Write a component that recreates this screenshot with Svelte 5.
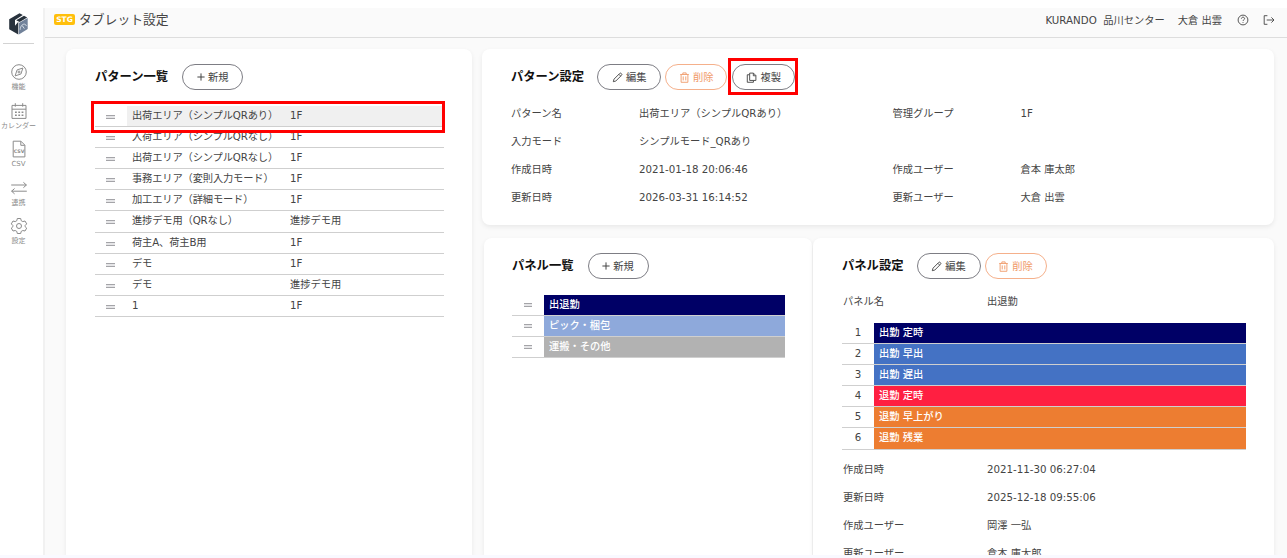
<script>
  const patterns = [
    ['出荷エリア（シンプルQRあり）', '1F'],
    ['入荷エリア（シンプルQRなし）', '1F'],
    ['出荷エリア（シンプルQRなし）', '1F'],
    ['事務エリア（変則入力モード）', '1F'],
    ['加工エリア（詳細モード）', '1F'],
    ['進捗デモ用（QRなし）', '進捗デモ用'],
    ['荷主A、荷主B用', '1F'],
    ['デモ', '1F'],
    ['デモ', '進捗デモ用'],
    ['1', '1F']
  ];
  const details = [
    ['パターン名', '出荷エリア（シンプルQRあり）', '管理グループ', '1F'],
    ['入力モード', 'シンプルモード_QRあり', '', ''],
    ['作成日時', '2021-01-18 20:06:46', '作成ユーザー', '倉本 庫太郎'],
    ['更新日時', '2026-03-31 16:14:52', '更新ユーザー', '大倉 出雲']
  ];
  const panels = [
    ['出退勤', '#000066'],
    ['ピック・梱包', '#8ea9db'],
    ['運搬・その他', '#b2b2b2']
  ];
  const items = [
    ['出勤 定時', '#000066'],
    ['出勤 早出', '#4472c4'],
    ['出勤 遅出', '#4472c4'],
    ['退勤 定時', '#ff1f41'],
    ['退勤 早上がり', '#ed7d31'],
    ['退勤 残業', '#ed7d31']
  ];
  const meta = [
    ['作成日時', '2021-11-30 06:27:04'],
    ['更新日時', '2025-12-18 09:55:06'],
    ['作成ユーザー', '岡澤 一弘'],
    ['更新ユーザー', '倉本 庫太郎']
  ];
  const nav = [
    ['compass', '機能'],
    ['calendar', 'カレンダー'],
    ['csv', 'CSV'],
    ['arrows', '連携'],
    ['gear', '設定']
  ];
</script>

{#snippet plus()}
  <svg class="plus" viewBox="0 0 8 8"><path d="M4 .4v7.2M.4 4h7.2" /></svg>
{/snippet}
{#snippet editBtn()}
  <button class="edit"><svg viewBox="0 0 12 12"><path d="M1.4 10.6 2.2 7.8 8.5 1.5Q9.3.8 10.1 1.6L10.5 2Q11.2 2.8 10.4 3.6L4.2 9.8ZM7.5 2.5 9.5 4.5" /></svg>編集</button>
{/snippet}
{#snippet deleteBtn()}
  <button class="delete"><svg viewBox="0 0 12 12"><path d="M1.3 2.7h9.4M4.2 2.5V1h3.6v1.5M2.3 2.9v8.3h7.4V2.9M4.6 4.8v4.4M7.4 4.8v4.4" /></svg>削除</button>
{/snippet}

<div class="page">
  <nav>
    <svg class="logo" viewBox="0 0 20 22">
      <path fill="#28323d" d="M.2 6.2 10.5.3l3.3 1.8L6 6.9v5.8l3.3-3.9 0 12.7L.2 16.2Z" />
      <path fill="#28323d" d="M7.2 7.2 15 2.8l3.2 1.8L10.7 9Z" />
      <path fill="#71829a" d="m9.9 10.1 8.8-5v11L9.9 21.4Z" />
      <path fill="none" stroke="#d5dde6" d="M11.2 16.7c0-5 4.8-7.5 6.2-3.8M13.2 12.5l2.1 3.1" />
    </svg>
    <hr />
    {#each nav as [icon, label]}
      <div class="nav-item">
        <svg viewBox="0 0 18 18">
          {#if icon === 'compass'}
            <circle cx="9" cy="9" r="7.3" /><path d="m5.1 12.9 2-6 5.8-1.9-2 6Z" /><circle cx="9" cy="9" r="1" />
          {:else if icon === 'calendar'}
            <path d="M2 3.4h14v13H2ZM2 7.2h14M5.3 1.2v3.5M12.7 1.2v3.5" /><path class="dots" d="M5 10.2h8.5M5 13.2h8.5" />
          {:else if icon === 'csv'}
            <path d="M3.2 1.2h7.7l4 4v11.7H3.2ZM10.8 1.3v4h4" />
            <text x="9.1" y="12.8" text-anchor="middle">CSV</text>
          {:else if icon === 'arrows'}
            <path d="M1.2 6h15.2l-3-2.7M16.4 6l-3 2.7M16.8 12.2H1.6l3-2.7M1.6 12.2l3 2.7" />
          {:else}
            <path d="M7.3 1.5h3.4l.5 2.2 1.6.9 2.2-.6 1.7 2.9L15.1 8.5v1.2l1.6 1.4-1.7 2.9-2.2-.5-1.6.9-.5 2.1H7.3l-.5-2.1-1.6-.9-2.2.5-1.7-2.9 1.6-1.4V8.5L1.3 6.9 3 4l2.2.6 1.6-.9Z" /><circle cx="9" cy="9" r="2.5" />
          {/if}
        </svg>
        <span>{label}</span>
      </div>
    {/each}
  </nav>

  <div class="body">
    <header>
      <span class="tag">STG</span>
      <h1>タブレット設定</h1>
      <span class="site">KURANDO&nbsp; 品川センター</span>
      <span class="user">大倉 出雲</span>
      <svg viewBox="0 0 12 12"><circle cx="6" cy="6" r="4.9" /><path d="M4.4 4.7c0-2 3.2-2 3.2 0 0 1-1.6 1.2-1.6 2.3M6 8.1v.8" /></svg>
      <svg class="exit" viewBox="0 0 12 12"><path d="M4.4 1.7H1.2v8.6h3.2M3.7 6h7.2M8.4 3.4 11 6 8.4 8.6" /></svg>
    </header>

    <main>
      <section class="card patterns">
        <div class="head"><h2>パターン一覧</h2><button class="new">{@render plus()}新規</button></div>
        <div class="table">
          {#each patterns as [name, group], i}
            <div class="row" class:selected={i === 0}>
              <i class="grip"></i><span class="name">{name}</span><span class="group">{group}</span>
            </div>
          {/each}
          <div class="mark row-mark"></div>
        </div>
      </section>

      <div class="right">
        <section class="card detail">
          <div class="head">
            <h2>パターン設定</h2>
            {@render editBtn()}
            {@render deleteBtn()}
            <button class="copy"><svg viewBox="0 0 12 12"><path d="M4 1.2h4.1l2.7 2.7v5.3H4ZM8 1.3v2.8h2.7M3.7 3H1.4v8.2h6.7V9.5" /></svg>複製<b class="mark button-mark"></b></button>
          </div>
          <div class="fields">
            {#each details as line}
              {#each line as cell}<span>{cell}</span>{/each}
            {/each}
          </div>
        </section>

        <div class="lower">
          <section class="card panels">
            <div class="head"><h2>パネル一覧</h2><button class="new">{@render plus()}新規</button></div>
            <div class="table">
              {#each panels as [name, color]}
                <div class="row"><i class="grip"></i><span class="bar" style:background-color={color}>{name}</span></div>
              {/each}
            </div>
          </section>

          <section class="card setting">
            <div class="head">
              <h2>パネル設定</h2>
              {@render editBtn()}
              {@render deleteBtn()}
            </div>
            <div class="pair first"><span>パネル名</span><span>出退勤</span></div>
            <div class="table">
              {#each items as [name, color], i}
                <div class="row"><span class="num">{i + 1}</span><span class="bar" style:background-color={color}>{name}</span></div>
              {/each}
            </div>
            <div class="meta">
              {#each meta as [label, value]}
                <div class="pair"><span>{label}</span><span>{value}</span></div>
              {/each}
            </div>
          </section>
        </div>
      </div>
    </main>
  </div>
</div>

<style>
  :global(body) {
    background: #f9f9ff;
  }
  .page {
    display: flex;
    box-sizing: border-box;
    width: 1287px;
    height: 555px;
    overflow: hidden;
    padding-top: 8px;
    background: #fff;
    color: #444;
    font: 10.25px/14px 'DejaVu Sans', 'Noto Sans CJK JP', sans-serif;
    white-space: nowrap;
  }
  svg {
    flex: none;
    fill: none;
    stroke: currentColor;
  }
  nav {
    flex: none;
    box-sizing: border-box;
    width: 45px;
    padding-right: 6px;
    border-right: 2px solid #f1f1f1;
    display: flex;
    flex-direction: column;
    align-items: center;
    color: #8b8b8b;
  }
  .logo {
    width: 20px;
    height: 22px;
    margin-top: 5px;
    stroke: none;
  }
  hr {
    width: 31px;
    height: 1px;
    margin: 8px 0 19px;
    border: 0;
    background: #d3d3d3;
  }
  .nav-item {
    display: flex;
    flex-direction: column;
    align-items: center;
    height: 38.5px;
    font-size: 7px;
    line-height: 10px;
  }
  .nav-item svg {
    width: 18px;
    height: 18px;
    margin-bottom: 1px;
  }
  .nav-item text {
    fill: currentColor;
    stroke: none;
    font-size: 4.8px;
    font-weight: bold;
  }
  .dots {
    stroke-width: 1.5;
    stroke-dasharray: 1.8 1.5;
  }
  .body {
    flex: 1;
    display: flex;
    flex-direction: column;
    background: #fafafa;
  }
  header {
    flex: none;
    display: flex;
    align-items: center;
    box-sizing: border-box;
    height: 30px;
    padding: 0 12px 6px 9px;
    border-bottom: 1px solid #ddd;
  }
  .tag {
    width: 21px;
    height: 11px;
    margin-right: 4px;
    border-radius: 2px;
    background: #ffbf0b;
    color: #fff;
    font-size: 7.5px;
    font-weight: bold;
    line-height: 11px;
    text-align: center;
  }
  h1 {
    flex: 1;
    margin: 0;
    font-size: 12.8px;
    font-weight: 400;
    line-height: 18px;
  }
  .site {
    margin-right: 13px;
  }
  .user {
    margin-right: 15px;
  }
  header svg {
    width: 12px;
    height: 12px;
    stroke-width: 0.9;
  }
  .exit {
    margin-left: 14px;
  }
  main {
    flex: 1;
    min-height: 0;
    display: flex;
    gap: 10px;
    padding: 11px 13px 0 21px;
  }
  .card {
    box-sizing: border-box;
    border-radius: 8px;
    background: #fff;
    box-shadow: 0 2px 5px rgba(0, 0, 0, 0.07);
  }
  .patterns,
  .panels,
  .setting {
    border-radius: 8px 8px 0 0;
  }
  .patterns {
    width: 406px;
    padding: 15px 28px 0 29px;
  }
  .right {
    flex: 1;
    display: flex;
    flex-direction: column;
    gap: 13px;
  }
  .detail {
    flex: none;
    height: 176px;
    padding: 15px 29px 0;
  }
  .lower {
    flex: 1;
    min-height: 0;
    display: flex;
    gap: 1px;
    padding-left: 2px;
  }
  .panels {
    width: 328px;
    padding: 15px 27px 0 28px;
  }
  .setting {
    flex: 1;
    padding: 15px 28px 0 29px;
  }
  .head {
    display: flex;
    align-items: center;
    height: 26px;
  }
  h2 {
    margin: 0 13px 0 0;
    color: #111;
    font-size: 12.3px;
    line-height: 18px;
  }
  .patterns h2,
  .panels h2 {
    margin-right: 14px;
  }
  button {
    position: relative;
    display: flex;
    align-items: center;
    justify-content: center;
    gap: 3px;
    box-sizing: border-box;
    width: 64px;
    height: 26px;
    padding: 0;
    border: 1px solid #7d7d84;
    border-radius: 13px;
    background: #fff;
    color: #444;
    font: inherit;
  }
  button svg {
    width: 11px;
    height: 11px;
  }
  .new {
    width: 61px;
  }
  .new .plus {
    width: 8px;
    height: 8px;
  }
  .delete {
    width: 62px;
    margin: 0 5px 0 4px;
    border-color: #f5b08b;
    color: #f09a69;
  }
  .copy {
    width: 63px;
  }
  .table {
    position: relative;
  }
  .patterns .table {
    margin-top: 16px;
  }
  .panels .table {
    margin-top: 16px;
  }
  .row {
    display: flex;
    box-sizing: border-box;
    height: 21.1px;
    border-bottom: 1px solid #cfcfcf;
    line-height: 19px;
  }
  .selected {
    background: linear-gradient(90deg, #fff 32px, #f0f0f0 32px);
  }
  .grip {
    flex: none;
    box-sizing: border-box;
    width: 9px;
    height: 4px;
    margin: 9px 17px 0 11px;
    border: solid #a4a4a8;
    border-width: 1px 0;
    background: #e6e6e8;
  }
  .name {
    width: 158px;
    letter-spacing: -0.14px;
  }
  .panels .grip {
    margin: 8px 12px 0 12px;
    width: 8px;
  }
  .bar {
    flex: 1;
    padding-left: 5px;
    color: #fff;
    font-weight: 500;
    line-height: 18px;
  }
  .num {
    width: 32px;
    text-align: center;
  }
  .fields {
    display: grid;
    grid-template-columns: 128px 253.5px 128px 1fr;
    grid-auto-rows: 28.1px;
    align-items: center;
    margin-top: 9px;
  }
  .pair {
    display: flex;
    align-items: center;
    height: 28px;
    padding-left: 1px;
  }
  .pair span:first-child {
    width: 144px;
  }
  .first {
    margin: 8px 0;
  }
  .meta {
    margin-top: 5px;
  }
  .mark {
    position: absolute;
    box-sizing: border-box;
    border: 3px solid #f00;
    pointer-events: none;
  }
  .row-mark {
    left: -4px;
    top: -5px;
    width: 354px;
    height: 32px;
  }
  .button-mark {
    left: -5px;
    top: -7px;
    width: 70px;
    height: 37px;
  }
</style>
